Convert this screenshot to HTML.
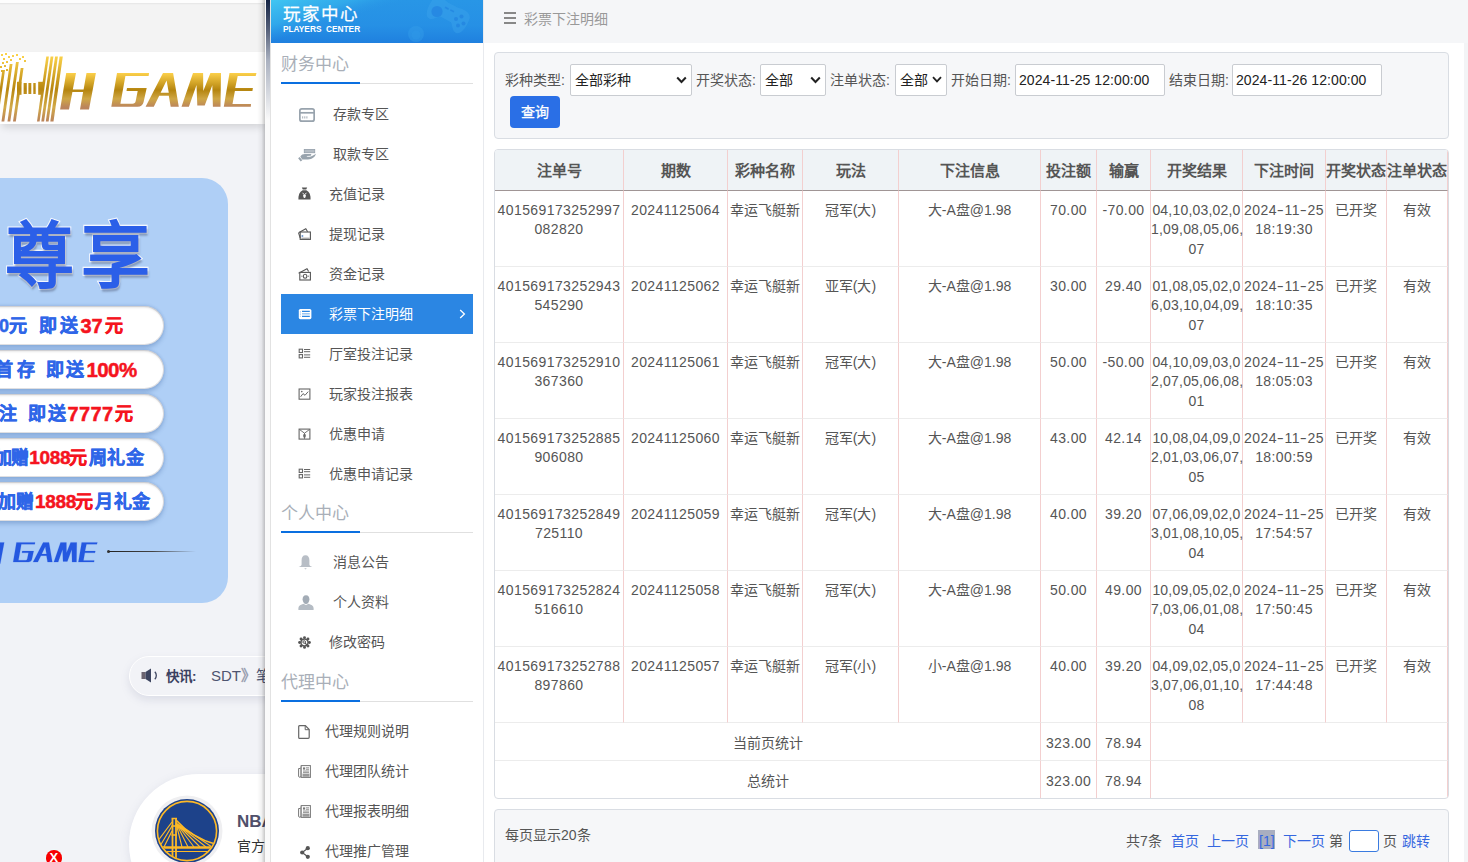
<!DOCTYPE html>
<html lang="zh-CN"><head><meta charset="utf-8">
<style>
*{box-sizing:border-box;margin:0;padding:0}
html,body{width:1468px;height:862px;overflow:hidden}
body{position:relative;background:#f2f3f7;font-family:"Liberation Sans",sans-serif;font-size:14px;color:#555}
.abs{position:absolute}
/* left site */
#topstrip{left:0;top:0;width:265px;height:52px;background:linear-gradient(#e3e3e3 0,#ededed 1px,#f3f3f3 2px);border-top:3px solid #fdfdfd}
#banner{left:0;top:52px;width:265px;height:72px;background:#fff;box-shadow:0 5px 8px -2px rgba(0,0,0,.14)}
#card{left:-40px;top:178px;width:268px;height:425px;background:#afcff6;border-radius:26px}
.pill{position:absolute;left:-40px;width:204px;height:39px;background:#fff;border-radius:20px;box-shadow:inset 0 0 0 1px rgba(140,140,150,.28), inset 0 2px 2px rgba(0,0,0,.09), 0 3px 4px rgba(60,100,160,.32), 0 -1px 3px rgba(60,100,160,.18);font-weight:bold;font-size:20px;color:#2f66e8;-webkit-text-stroke:.6px #2f66e8;line-height:39px;white-space:nowrap;overflow:hidden;text-align:right;padding-right:40px}
.pt{position:absolute;height:22px;line-height:22px;font-size:18px;font-weight:bold;white-space:nowrap;color:#2f66e8;-webkit-text-stroke:.5px #2f66e8}
.pt.r,.pt.rc{color:#f5141e;-webkit-text-stroke:.5px #f5141e}
.pt.r{font-size:19px;letter-spacing:-.3px}


.zx{font-size:69px;line-height:88px;transform:scaleY(1.04);transform-origin:0 0;font-weight:900;color:#2b5fe8;-webkit-text-stroke:2px #f4f8ff;paint-order:stroke fill;letter-spacing:7px;white-space:nowrap;text-shadow:1px 3px 2px rgba(80,90,120,.45)}
#news{left:129px;top:656px;width:200px;height:40px;border-radius:20px;background:#f2f3f7;border:1px solid #fff;box-shadow:0 4px 8px rgba(120,130,160,.18)}
#nba{left:129px;top:774px;width:240px;height:140px;border-radius:70px;background:#fff;box-shadow:0 2px 10px rgba(120,130,160,.15)}
/* sidebar */
#sbshadow{left:257px;top:0;width:8px;height:862px;background:linear-gradient(to right,rgba(0,0,0,0),rgba(0,0,0,.05) 55%,rgba(0,0,0,.22))}
#sidebar{left:265px;top:0;width:218px;height:862px;background:#fafafa}
#sbpanel{left:271px;top:0;width:212px;height:862px;background:#fff}
#sbstrip{left:266px;top:0;width:4px;height:120px;background:linear-gradient(#152444,#56617a 25%,#a9b0bf 50%,rgba(250,250,250,0))}
#sbline{left:270px;top:0;width:1px;height:862px;background:#e2e2e2}
#sbrline{left:483px;top:0;width:1px;height:862px;background:#e8eaee}
#sbhead{left:271px;top:0;width:212px;height:43px;background:#2690e5;color:#fff;overflow:hidden}
.sec{position:absolute;left:281px;width:192px;height:31px;line-height:20px;padding-top:2px;color:#a9afb8;font-size:17px;border-bottom:1px solid #e0e0e0}
.sec:after{content:"";position:absolute;left:0;bottom:-1px;width:79px;height:2px;background:#0a6fe0}
.mi{position:absolute;left:281px;width:192px;height:40px;line-height:40px;color:#555;font-size:14px}
.mi .t{position:absolute;left:48px;top:0}
.mi .ic{position:absolute;left:17px;top:13px;width:14px;height:14px}
.mi.act{background:#2b86e3;color:#fff}
/* content */
#crumb{left:484px;top:0;width:984px;height:43px;background:#f5f6f8}
#content{left:484px;top:43px;width:980px;height:819px;background:#fff}
#rgutter{left:1464px;top:43px;width:4px;height:819px;background:#f3f4f6}
#filter{left:494px;top:52px;width:955px;height:87px;background:#f6f7f9;border:1px solid #d9dde3;border-radius:4px}
.lbl{position:absolute;top:71px;line-height:18px;font-size:14px;color:#555;white-space:nowrap}
.sel{position:absolute;top:64px;height:32px;background:#fff;border:1px solid #c9ccd1;border-radius:2px;color:#222;font-size:14px;line-height:30px;padding-left:4px;white-space:nowrap}
.sel svg{position:absolute;right:4px;top:11px}
.sel.d{color:#222;padding-left:3px;letter-spacing:.08px}
#btn{left:510px;top:96px;width:50px;height:32px;background:#2a6fe6;border-radius:4px;color:#fff;font-size:14px;line-height:32px;text-align:center;-webkit-text-stroke:.3px #fff}
/* table */
#tbl{left:494px;top:149px;width:955px;height:650px;border:1px solid #d9dde3;border-radius:4px;overflow:hidden;background:#fff}
table{border-collapse:separate;border-spacing:0;table-layout:fixed;width:953px}
td,th{text-align:center;vertical-align:top;border-right:1px solid #f3cfcf;color:#555;font-weight:normal}
th{background:#eff3f6;height:41px;padding-bottom:2px;vertical-align:middle;font-weight:bold;font-size:15px;color:#555;border-bottom:1px solid #a09595}
td{height:76px;border-bottom:1px solid #ececec;padding-top:10px;line-height:19.3px;font-size:14px;white-space:nowrap}
.n{letter-spacing:.4px}
.h{font-style:normal;display:inline-block;transform:scaleX(1.5);margin:0 1.3px 0 1.3px}
tr.sum td{height:38px;padding-top:4px;line-height:33px;vertical-align:top}
tr.sum:last-child td{border-bottom:none;height:37px}
#pager{left:494px;top:809px;width:955px;height:80px;background:#f6f7f9;border:1px solid #d9dde3;border-radius:4px}
.pg{position:absolute;top:832px;line-height:18px;font-size:14px;color:#555;white-space:nowrap}
.lnk{color:#3567e0}
</style></head><body>

<!-- left site -->
<div id="topstrip" class="abs"></div>
<div id="banner" class="abs"></div>
<svg class="abs" style="left:0;top:52px" width="265" height="72" viewBox="0 0 265 72">
<defs><linearGradient id="gold3" gradientUnits="userSpaceOnUse" x1="0" y1="4" x2="0" y2="70"><stop offset="0" stop-color="#fbd24a"/><stop offset="0.5" stop-color="#b8860f"/><stop offset="0.78" stop-color="#d2aa48"/><stop offset="1" stop-color="#b9815a"/></linearGradient>
<linearGradient id="gold2" gradientUnits="userSpaceOnUse" x1="0" y1="21" x2="0" y2="55"><stop offset="0" stop-color="#fcd04a"/><stop offset="0.5" stop-color="#b5850f"/><stop offset="0.76" stop-color="#cfa745"/><stop offset="1" stop-color="#bb845c"/></linearGradient></defs>
<g fill="url(#gold3)"><polygon points="46.3,4.6 48.9,4.6 39.6,69.6 37.0,69.6"/><polygon points="50.6,4.6 53.4,4.6 44.1,69.6 41.3,69.6"/><polygon points="55.1,4.6 57.9,4.6 48.6,69.6 45.8,69.6"/><polygon points="59.6,4.6 62.8,4.6 53.5,69.6 50.3,69.6"/><polygon points="2.4,18.0 5.0,18.0 -2.4,69.6 -5.0,69.6"/><polygon points="9.7,12.0 12.5,12.0 4.3,69.6 1.5,69.6"/><polygon points="16.0,10.0 18.8,10.0 10.3,69.6 7.5,69.6"/><polygon points="20.7,16.0 23.5,16.0 15.8,69.6 13.0,69.6"/><rect x="17" y="29.8" width="4.5" height="13"/><rect x="23.6" y="31" width="3.2" height="11"/><rect x="28.4" y="31" width="2.9" height="11"/><rect x="33.3" y="31" width="2.4" height="11"/><rect x="38.2" y="29.8" width="4.8" height="13"/><rect x="1" y="2" width="2" height="2"/><rect x="5" y="1" width="2" height="2"/><rect x="3" y="6" width="2" height="2"/><rect x="8" y="4" width="2" height="2"/><rect x="12" y="3" width="2" height="2"/><rect x="2" y="10" width="2" height="2"/><rect x="6" y="9" width="2" height="2"/><rect x="16" y="2" width="2" height="2"/><rect x="22" y="4" width="2" height="2"/><rect x="24" y="8" width="2" height="2"/><rect x="0" y="14" width="2" height="2"/><rect x="4" y="13" width="2" height="2"/><rect x="1" y="18" width="2" height="2"/><rect x="6" y="17" width="2" height="2"/><rect x="10" y="7" width="2" height="2"/><rect x="19" y="6" width="2" height="2"/></g>
<g fill="url(#gold2)"><polygon points="66.2,21.0 76.0,21.0 72.8,37.5 83.6,37.5 86.5,21.0 95.9,21.0 89.0,57.6 80.0,57.6 83.1,40.0 72.4,40.0 69.0,57.6 60.1,57.6"/><path d="M117 20.9 L149.1 20.9 L148.6 23.9 L125.4 23.9 L120.4 51.7 L132.5 51.7 Q135.2 51.7 135.7 49.0 L137.7 38.9 L126.5 38.9 L127 35.9 L146.7 35.9 L143.6 50.0 Q142.5 54.8 137.5 54.8 L111.3 54.8 Z"/><path fill-rule="evenodd" d="M163.0,20.9 L173.1,20.9 L178.8,54.8 L170.7,54.8 L168.8,43.8 L159.2,43.8 L153.8,54.8 L145.6,54.8 Z M166.6,28.5 L168.8,40.8 L160.6,40.8 Z"/><polygon points="193.0,20.9 203.1,20.9 203.3,38.9 210.4,20.9 221.0,20.9 220.5,54.8 212.9,54.8 212.3,33.2 204.7,53.6 197.3,53.6 196.5,32.9 188.9,54.8 181.5,54.8"/><polygon points="229.5,20.9 256.5,20.9 255.7,23.9 237.7,23.9 235.2,35.9 252.9,35.9 252.4,38.9 234.9,38.9 232.5,52.0 251.0,52.0 250.8,54.8 223.8,54.8"/></g>
</svg>
<div id="card" class="abs"></div>
<div class="abs zx" style="left:5px;top:211px">尊享</div>
<div class="pill" style="top:306px"></div>
<div class="pill" style="top:350px"></div>
<div class="pill" style="top:394px"></div>
<div class="pill" style="top:438px"></div>
<div class="pill" style="top:482px"></div>
<div class="pt c" style="left:-1px;top:315px">0元</div>
<div class="pt c" style="left:39.4px;top:315px">即</div>
<div class="pt c" style="left:60.0px;top:315px">送</div>
<div class="pt r" style="left:80.6px;top:315px;font-size:20px">37</div><div class="pt rc" style="left:104.5px;top:315px">元</div>
<div class="pt c" style="left:-5.0px;top:359px">首</div>
<div class="pt c" style="left:17.4px;top:359px">存</div>
<div class="pt c" style="left:45.8px;top:359px">即</div>
<div class="pt c" style="left:66.0px;top:359px">送</div>
<div class="pt r" style="left:86.5px;top:359px;font-size:20.5px;letter-spacing:-.6px">100%</div>
<div class="pt c" style="left:-1.0px;top:403px">注</div>
<div class="pt c" style="left:27.6px;top:403px">即</div>
<div class="pt c" style="left:47.9px;top:403px">送</div>
<div class="pt r" style="left:67.5px;top:403px;font-size:20px;letter-spacing:.4px">7777</div>
<div class="pt rc" style="left:114.5px;top:403px">元</div>
<div class="pt c" style="left:-6.0px;top:447px">加</div>
<div class="pt c" style="left:10.5px;top:447px">赠</div>
<div class="pt r" style="left:29.2px;top:447px">1088</div>
<div class="pt rc" style="left:69.0px;top:447px">元</div>
<div class="pt c" style="left:88.5px;top:447px">周</div>
<div class="pt c" style="left:107.0px;top:447px">礼</div>
<div class="pt c" style="left:125.8px;top:447px">金</div>
<div class="pt c" style="left:-2.5px;top:491px">加</div>
<div class="pt c" style="left:16.2px;top:491px">赠</div>
<div class="pt r" style="left:34.9px;top:491px">1888</div>
<div class="pt rc" style="left:75.0px;top:491px">元</div>
<div class="pt c" style="left:95.0px;top:491px">月</div>
<div class="pt c" style="left:113.7px;top:491px">礼</div>
<div class="pt c" style="left:132.3px;top:491px">金</div>
<svg class="abs" style="left:0;top:530px" width="110" height="40" viewBox="0 0 110 40"><g transform="translate(-51.4 0.3) scale(0.58)" fill="#2458e0" stroke="#2458e0" stroke-width="0.3"><polygon points="66.2,21.0 76.0,21.0 72.8,37.5 83.6,37.5 86.5,21.0 95.9,21.0 89.0,57.6 80.0,57.6 83.1,40.0 72.4,40.0 69.0,57.6 60.1,57.6"/><path d="M117 20.9 L149.1 20.9 L148.6 23.9 L125.4 23.9 L120.4 51.7 L132.5 51.7 Q135.2 51.7 135.7 49.0 L137.7 38.9 L126.5 38.9 L127 35.9 L146.7 35.9 L143.6 50.0 Q142.5 54.8 137.5 54.8 L111.3 54.8 Z"/><path fill-rule="evenodd" d="M163.0,20.9 L173.1,20.9 L178.8,54.8 L170.7,54.8 L168.8,43.8 L159.2,43.8 L153.8,54.8 L145.6,54.8 Z M166.6,28.5 L168.8,40.8 L160.6,40.8 Z"/><polygon points="193.0,20.9 203.1,20.9 203.3,38.9 210.4,20.9 221.0,20.9 220.5,54.8 212.9,54.8 212.3,33.2 204.7,53.6 197.3,53.6 196.5,32.9 188.9,54.8 181.5,54.8"/><polygon points="229.5,20.9 256.5,20.9 255.7,23.9 237.7,23.9 235.2,35.9 252.9,35.9 252.4,38.9 234.9,38.9 232.5,52.0 251.0,52.0 250.8,54.8 223.8,54.8"/></g></svg>
<div class="abs" style="left:107px;top:550px;width:3px;height:3px;border-radius:2px;background:#333"></div>
<div class="abs" style="left:109px;top:550.5px;width:87px;height:1.5px;background:linear-gradient(to right,#222,#444 50%,rgba(60,60,60,0))"></div>
<div id="news" class="abs"></div>
<svg class="abs" style="left:141px;top:668px" width="17" height="15" viewBox="0 0 17 15"><rect x="0.5" y="4" width="4" height="7" fill="#6b6470"/><path d="M4.5 4 L10 0.5 V14.5 L4.5 11 Z" fill="#3d4560"/><path d="M13.8 3.8 C15.8 5.6 15.8 9.4 13.8 11.2" fill="none" stroke="#3d4560" stroke-width="1.3"/></svg>
<div class="abs" style="left:166px;top:668px;font-weight:bold;font-size:13.5px;line-height:18px;color:#3a4060;white-space:nowrap">快讯:</div>
<div class="abs" style="left:211px;top:666px;font-size:15px;line-height:20px;color:#4e5570;white-space:nowrap">SDT<span style="color:#9aa0b0;font-weight:bold">》</span>笔</div>
<div id="nba" class="abs"></div>
<svg class="abs" style="left:151px;top:795px" width="72" height="72" viewBox="0 0 72 72"><defs><clipPath id="cc"><circle cx="36" cy="36" r="29"/></clipPath></defs><circle cx="36" cy="36" r="35.5" fill="#efeff1"/><circle cx="36" cy="36" r="32" fill="#1d428a"/><circle cx="36" cy="36" r="29.6" fill="none" stroke="#fdb927" stroke-width="1.6"/>
<g clip-path="url(#cc)" stroke="#fdb927" fill="none"><path d="M21.5 24 V72 M25 24 V72" stroke-width="1.8"/><path d="M20.5 23.5 H26 M20.5 31 H26 M20.5 40 H26" stroke-width="1.6"/><path d="M21 27 L6 47 M21 31 L9 51 M21 36 L13 52" stroke-width="1.2"/><path d="M25 25 Q 42 44 68 50" stroke-width="1.5"/><path d="M25 28 L31 52 M25 28 L37 52 M25 28 L43 52 M25 28 L49 52 M25 28 L55 52 M25 28 L61 52" stroke-width="1.1"/><path d="M4 52.5 H68" stroke-width="2.4"/><path d="M4 56.5 H68" stroke-width="1"/></g></svg>
<div class="abs" style="left:237px;top:812px;font-weight:bold;font-size:17px;line-height:20px;color:#50506a;white-space:nowrap">NBA</div>
<div class="abs" style="left:237px;top:837px;font-size:14px;line-height:18px;color:#333;white-space:nowrap">官方</div>
<div class="abs" style="left:46px;top:850px;width:15.5px;height:15.5px;border-radius:50%;background:#f70000;color:#fff;font-size:13px;line-height:15px;text-align:center;font-weight:bold;box-shadow:0 0 0 1px #eefafa">X</div>

<!-- sidebar -->
<div id="sbshadow" class="abs"></div>
<div id="sidebar" class="abs"></div><div id="sbpanel" class="abs"></div>
<div id="sbstrip" class="abs"></div>
<div id="sbline" class="abs"></div>
<div id="sbrline" class="abs"></div>
<div id="sbhead" class="abs">
  <svg class="abs" style="left:0;top:0" width="212" height="43" viewBox="0 0 212 43"><defs><linearGradient id="hb" x1="0" y1="0" x2="0" y2="1"><stop offset="0" stop-color="#2896e6"/><stop offset="0.6" stop-color="#2690e5"/><stop offset="1" stop-color="#1f80df"/></linearGradient><linearGradient id="hc" x1="0" y1="0" x2="1" y2="1"><stop offset="0" stop-color="#40c6f2"/><stop offset="0.3" stop-color="#33aeec" stop-opacity="0.8"/><stop offset="0.5" stop-color="#2a98e7" stop-opacity="0"/></linearGradient></defs>
<rect width="212" height="43" fill="url(#hb)"/><path d="M0 0 H135 L0 42 Z" fill="url(#hc)"/>
<g transform="translate(177 15) rotate(28)"><path d="M-21 -5 C-21 -12 -13 -13 -6 -11 L6 -11 C13 -13 21 -12 21 -5 C22 4 20 12 15 12 C11 12 9 7 6 5 L-6 5 C-9 7 -11 12 -15 12 C-20 12 -22 4 -21 -5 Z" fill="#3ea5ec" opacity="0.38"/></g>
<circle cx="166" cy="11.5" r="5.6" fill="#1f7fdf" opacity="0.6"/><g fill="#1f7fdf" opacity="0.6"><circle cx="185" cy="19" r="2"/><circle cx="190.5" cy="16.5" r="2"/><circle cx="187" cy="25.5" r="2"/><circle cx="192.5" cy="23.5" r="2"/><rect x="174" y="7.5" width="4" height="1.6" transform="rotate(28 176 8)"/><rect x="179" y="10" width="4" height="1.6" transform="rotate(28 181 11)"/></g>
<circle cx="145" cy="34" r="8" fill="#3aa2ea" opacity="0.35"/><circle cx="145" cy="35" r="4.5" fill="#2d98e8" opacity="0.5"/>
</svg>
<div class="abs" style="left:11.5px;top:3px;font-size:17.5px;line-height:22px;letter-spacing:2.2px;white-space:nowrap;-webkit-text-stroke:.25px #fff">玩家中心</div>
  <div class="abs" style="left:12px;top:24px;font-size:8.3px;line-height:10px;white-space:nowrap;font-weight:bold">PLAYERS&nbsp; CENTER</div>
</div>

<div class="sec" style="top:53px">财务中心</div>
<div class="mi" style="top:94px"><span class="t" style="left:52px">存款专区</span></div>
<div class="mi" style="top:134px"><span class="t" style="left:52px">取款专区</span></div>
<div class="mi" style="top:174px"><span class="t">充值记录</span></div>
<div class="mi" style="top:214px"><span class="t">提现记录</span></div>
<div class="mi" style="top:254px"><span class="t">资金记录</span></div>
<div class="mi act" style="top:294px"><span class="t">彩票下注明细</span><svg class="abs" style="left:178px;top:15px" width="7" height="10" viewBox="0 0 7 10"><path d="M1.2 1 L5.4 5 L1.2 9" fill="none" stroke="#fff" stroke-width="1.3"/></svg></div>
<div class="mi" style="top:334px"><span class="t">厅室投注记录</span></div>
<div class="mi" style="top:374px"><span class="t">玩家投注报表</span></div>
<div class="mi" style="top:414px"><span class="t">优惠申请</span></div>
<div class="mi" style="top:454px"><span class="t">优惠申请记录</span></div>
<div class="sec" style="top:502px">个人中心</div>
<div class="mi" style="top:542px"><span class="t" style="left:52px">消息公告</span></div>
<div class="mi" style="top:582px"><span class="t" style="left:52px">个人资料</span></div>
<div class="mi" style="top:622px"><span class="t">修改密码</span></div>
<div class="sec" style="top:671px">代理中心</div>
<div class="mi" style="top:711px"><span class="t" style="left:44px">代理规则说明</span></div>
<div class="mi" style="top:751px"><span class="t" style="left:44px">代理团队统计</span></div>
<div class="mi" style="top:791px"><span class="t" style="left:44px">代理报表明细</span></div>
<div class="mi" style="top:831px"><span class="t" style="left:44px">代理推广管理</span></div>
<svg class="abs" style="left:299px;top:108px" width="16" height="14" viewBox="0 0 16 14"><rect x="0.85" y="0.85" width="14.3" height="12.3" rx="2" fill="none" stroke="#98a3ad" stroke-width="1.7"/><line x1="1" y1="4.8" x2="15" y2="4.8" stroke="#98a3ad" stroke-width="1.7"/><path d="M3.7 8.3v2.2M5.8 8.3v2.2M7.9 8.3v2.2" stroke="#98a3ad" stroke-width="0.9"/></svg>
<svg class="abs" style="left:298px;top:149px" width="19" height="13" viewBox="0 0 19 13"><rect x="6.3" y="0.4" width="10.4" height="3.3" fill="#b4bcc4" stroke="#98a3ad" stroke-width="0.9"/><path d="M2.3 7.6 C3.3 5.8 5 5 7 5 L12.6 5 C13.6 5 13.7 6.5 12.6 6.7 L8.6 6.9 C9.1 7.7 10.6 8 12 7.7 C14 7.3 16 5.8 17.9 4.7 C17.7 6.5 16.1 8.4 14 9.4 C12.5 10.1 10.5 10.5 8.5 10.5 L4.2 10.5 Z" fill="#98a3ad"/><path d="M0.9 8.7 L3.5 11.8" stroke="#98a3ad" stroke-width="2"/></svg>
<svg class="abs" style="left:298px;top:187px" width="13" height="13" viewBox="0 0 13 13"><path d="M3.8 0.5 L9.2 0.5 L8.2 2.6 L4.8 2.6 Z" fill="#555"/><path d="M4.6 3.2 L8.4 3.2 C11.5 4.8 12.8 8 12.6 12.6 L0.4 12.6 C0.2 8 1.5 4.8 4.6 3.2 Z" fill="#555"/><path d="M4.6 5.8 L6.5 8 L8.4 5.8 M6.5 8 V11 M5 8.6 H8 M5 9.8 H8" stroke="#fff" stroke-width="0.9" fill="none"/></svg>
<svg class="abs" style="left:298px;top:228px" width="13" height="12" viewBox="0 0 13 12"><path d="M0.6 4.8 L7.8 0.8 L9.6 3.8" fill="none" stroke="#555" stroke-width="1.1"/><rect x="2.2" y="4" width="10.2" height="7.4" fill="#fff" stroke="#555" stroke-width="1.1"/><path d="M0.6 4.8 L2.2 10" stroke="#555" stroke-width="1.1"/><rect x="3.6" y="7" width="1.6" height="2" fill="#7a9fd0"/><line x1="3.4" y1="10.2" x2="11.6" y2="10.2" stroke="#777" stroke-width="0.8"/></svg>
<svg class="abs" style="left:298px;top:268px" width="13" height="13" viewBox="0 0 13 13"><path d="M0.6 5.2 L9 0.8 L10.6 3.6" fill="none" stroke="#555" stroke-width="1.1"/><rect x="1.8" y="4.4" width="10.6" height="7.6" fill="#fff" stroke="#555" stroke-width="1.1"/><ellipse cx="7.1" cy="8.2" rx="1.8" ry="2" fill="none" stroke="#555" stroke-width="1.1"/><path d="M3.4 8.2h1M9.8 8.2h1" stroke="#555" stroke-width="1"/></svg>
<svg class="abs" style="left:298px;top:308px" width="14" height="12" viewBox="0 0 14 12"><rect x="0.8" y="1" width="12.6" height="10.2" rx="1.6" fill="#fff"/><path d="M4 3.4H11.8M4 8.3H11.8" stroke="#2b86e3" stroke-width="1.3"/><path d="M4 5.85H11.8" stroke="#2b86e3" stroke-width="0.7"/><path d="M2.4 3.4V8.6" stroke="#2b86e3" stroke-width="0.6" stroke-dasharray="1 1.2"/></svg>
<svg class="abs" style="left:298px;top:348px" width="13" height="12" viewBox="0 0 13 12"><rect x="1.2" y="1.2" width="3.3" height="3.3" fill="none" stroke="#666" stroke-width="1.1"/><rect x="1.2" y="6.6" width="3.3" height="3.3" fill="none" stroke="#666" stroke-width="1.1"/><path d="M6 1.5H12.2M6 3.7H12.2M6 6.9H12.2M6 9.3H12.2" stroke="#666" stroke-width="1"/></svg>
<svg class="abs" style="left:298px;top:388px" width="13" height="12" viewBox="0 0 13 12"><rect x="1.1" y="1" width="10.8" height="10.2" fill="none" stroke="#666" stroke-width="1.1"/><path d="M2.6 8.8 L5 5.6 L7 7.3 L10.2 3.6" fill="none" stroke="#666" stroke-width="1"/><circle cx="3.8" cy="3.6" r="0.8" fill="#666"/></svg>
<svg class="abs" style="left:298px;top:428px" width="13" height="12" viewBox="0 0 13 12"><rect x="1.1" y="1.1" width="10.8" height="10" fill="none" stroke="#666" stroke-width="1.1"/><path d="M1.5 1.5 L6.5 5.2 L11.5 1.5" fill="none" stroke="#666" stroke-width="0.9"/><ellipse cx="6.5" cy="7.8" rx="1.4" ry="2.1" fill="#777"/><path d="M6.5 5 V11" stroke="#666" stroke-width="0.8"/></svg>
<svg class="abs" style="left:298px;top:555px" width="15" height="15" viewBox="0 0 15 15"><path d="M7.5 0.3 C4.8 0.3 3.6 2.4 3.6 5.2 L3.6 9.5 C3.6 10.8 2.4 11.5 0.6 12 L14.4 12 C12.6 11.5 11.4 10.8 11.4 9.5 L11.4 5.2 C11.4 2.4 10.2 0.3 7.5 0.3 Z" fill="#b8bec6"/><path d="M6.2 13.3 H8.8 L7.5 14.6 Z" fill="#b8bec6"/></svg>
<svg class="abs" style="left:298px;top:595px" width="16" height="15" viewBox="0 0 16 15"><path d="M8 0.2 C10.5 0.2 11.4 2.2 11.4 4.2 C11.4 6.8 10 9 8 9 C6 9 4.6 6.8 4.6 4.2 C4.6 2.2 5.5 0.2 8 0.2 Z" fill="#a3acb6"/><path d="M5.6 8.8 C3 9.6 0.4 10.8 0.4 13 L0.4 15 L15.6 15 L15.6 13 C15.6 10.8 13 9.6 10.4 8.8 C9.6 9.6 8.8 9.9 8 9.9 C7.2 9.9 6.4 9.6 5.6 8.8 Z" fill="#b5bcc4"/></svg>
<svg class="abs" style="left:298px;top:636px" width="13" height="13" viewBox="0 0 13 13"><g fill="#555"><circle cx="11.40" cy="6.50" r="1.45"/><circle cx="9.96" cy="9.96" r="1.45"/><circle cx="6.50" cy="11.40" r="1.45"/><circle cx="3.04" cy="9.96" r="1.45"/><circle cx="1.60" cy="6.50" r="1.45"/><circle cx="3.04" cy="3.04" r="1.45"/><circle cx="6.50" cy="1.60" r="1.45"/><circle cx="9.96" cy="3.04" r="1.45"/></g><circle cx="6.5" cy="6.5" r="3.5" fill="#fff" stroke="#555" stroke-width="1.4"/><circle cx="6.2" cy="6" r="1.3" fill="none" stroke="#555" stroke-width="1"/><path d="M7 7 L8.8 8.8" stroke="#555" stroke-width="1.1"/></svg>
<svg class="abs" style="left:298px;top:725px" width="12" height="14" viewBox="0 0 12 14"><path d="M1.5 0.7 H7.4 L11.2 4.5 V12.3 C11.2 12.9 10.8 13.3 10.2 13.3 H1.5 C1 13.3 0.7 12.9 0.7 12.3 V1.7 C0.7 1.1 1 0.7 1.5 0.7 Z" fill="none" stroke="#666" stroke-width="1.2"/><path d="M7.2 0.8 V4.7 H11" fill="none" stroke="#666" stroke-width="1"/></svg>
<svg class="abs" style="left:298px;top:765px" width="13" height="13" viewBox="0 0 13 13"><path d="M3 1.5 V11 C3 11.8 2.5 12.3 1.8 12.3 C1.1 12.3 0.6 11.8 0.6 11 V3.5 H2.5" fill="none" stroke="#777" stroke-width="1"/><rect x="3.2" y="0.6" width="9.2" height="11.8" fill="#fff" stroke="#777" stroke-width="1"/><rect x="5" y="2.4" width="2.2" height="2.2" fill="#777"/><path d="M8 2.8H11M8 4.3H11M5 6H11M5 7.4H11" stroke="#777" stroke-width="0.8"/><rect x="4.5" y="8.6" width="7" height="3.2" fill="#999"/></svg>
<svg class="abs" style="left:300px;top:846px" width="10" height="13" viewBox="0 0 10 13"><g fill="#555"><circle cx="7.8" cy="2.2" r="2.1"/><circle cx="2.2" cy="6.5" r="2.1"/><circle cx="7.8" cy="10.8" r="2.1"/></g><path d="M7.8 2.2 L2.2 6.5 L7.8 10.8" fill="none" stroke="#555" stroke-width="1.2"/></svg>
<svg class="abs" style="left:298px;top:468px" width="13" height="12" viewBox="0 0 13 12"><rect x="1.2" y="1.2" width="3.3" height="3.3" fill="none" stroke="#666" stroke-width="1.1"/><rect x="1.2" y="6.6" width="3.3" height="3.3" fill="none" stroke="#666" stroke-width="1.1"/><path d="M6 1.5H12.2M6 3.7H12.2M6 6.9H12.2M6 9.3H12.2" stroke="#666" stroke-width="1"/></svg>
<svg class="abs" style="left:298px;top:805px" width="13" height="13" viewBox="0 0 13 13"><path d="M3 1.5 V11 C3 11.8 2.5 12.3 1.8 12.3 C1.1 12.3 0.6 11.8 0.6 11 V3.5 H2.5" fill="none" stroke="#777" stroke-width="1"/><rect x="3.2" y="0.6" width="9.2" height="11.8" fill="#fff" stroke="#777" stroke-width="1"/><rect x="5" y="2.4" width="2.2" height="2.2" fill="#777"/><path d="M8 2.8H11M8 4.3H11M5 6H11M5 7.4H11" stroke="#777" stroke-width="0.8"/><rect x="4.5" y="8.6" width="7" height="3.2" fill="#999"/></svg>

<!-- content -->
<div id="crumb" class="abs"></div>
<div id="content" class="abs"></div>
<div id="rgutter" class="abs"></div>
<div class="abs" style="left:524px;top:10px;color:#999;font-size:14px;line-height:18px">彩票下注明细</div>
<div class="abs" style="left:504px;top:12px;width:12px;height:2px;background:#888"></div><div class="abs" style="left:504px;top:17px;width:12px;height:2px;background:#888"></div><div class="abs" style="left:504px;top:22px;width:12px;height:2px;background:#888"></div>

<div id="filter" class="abs"></div>
<div class="lbl" style="left:505px">彩种类型:</div>
<div class="sel" style="left:570px;width:122px">全部彩种<svg width="11" height="8" viewBox="0 0 11 8"><path d="M1.2 1.5 L5.5 6 L9.8 1.5" fill="none" stroke="#222" stroke-width="2"/></svg></div>
<div class="lbl" style="left:696px">开奖状态:</div>
<div class="sel" style="left:760px;width:66px">全部<svg width="11" height="8" viewBox="0 0 11 8"><path d="M1.2 1.5 L5.5 6 L9.8 1.5" fill="none" stroke="#222" stroke-width="2"/></svg></div>
<div class="lbl" style="left:830px">注单状态:</div>
<div class="sel" style="left:895px;width:52px">全部<svg style="right:4px" width="10" height="7" viewBox="0 0 10 7"><path d="M1 1.2 L5 5.4 L9 1.2" fill="none" stroke="#222" stroke-width="1.8"/></svg></div>
<div class="lbl" style="left:951px">开始日期:</div>
<div class="sel d" style="left:1015px;width:150px">2024-11-25 12:00:00</div>
<div class="lbl" style="left:1169px">结束日期:</div>
<div class="sel d" style="left:1232px;width:150px">2024-11-26 12:00:00</div>
<div id="btn" class="abs">查询</div>

<div id="tbl" class="abs">
<table>
<colgroup><col style="width:129px"><col style="width:104px"><col style="width:75px"><col style="width:96px"><col style="width:142px"><col style="width:56px"><col style="width:54px"><col style="width:92px"><col style="width:83px"><col style="width:61px"><col style="width:61px"></colgroup>
<tr><th>注单号</th><th>期数</th><th>彩种名称</th><th>玩法</th><th>下注信息</th><th>投注额</th><th>输赢</th><th>开奖结果</th><th>下注时间</th><th>开奖状态</th><th>注单状态</th></tr>
<tr><td class="n">401569173252997<br>082820</td><td class="n">20241125064</td><td>幸运飞艇新</td><td>冠军(大)</td><td>大-A盘@1.98</td><td class="n">70.00</td><td class="n">-70.00</td><td class="n" style="letter-spacing:.2px">04,10,03,02,0<br>1,09,08,05,06,<br>07</td><td class="n">2024<i class="h">-</i>11<i class="h">-</i>25<br>18:19:30</td><td>已开奖</td><td>有效</td></tr>
<tr><td class="n">401569173252943<br>545290</td><td class="n">20241125062</td><td>幸运飞艇新</td><td>亚军(大)</td><td>大-A盘@1.98</td><td class="n">30.00</td><td class="n">29.40</td><td class="n" style="letter-spacing:.2px">01,08,05,02,0<br>6,03,10,04,09,<br>07</td><td class="n">2024<i class="h">-</i>11<i class="h">-</i>25<br>18:10:35</td><td>已开奖</td><td>有效</td></tr>
<tr><td class="n">401569173252910<br>367360</td><td class="n">20241125061</td><td>幸运飞艇新</td><td>冠军(大)</td><td>大-A盘@1.98</td><td class="n">50.00</td><td class="n">-50.00</td><td class="n" style="letter-spacing:.2px">04,10,09,03,0<br>2,07,05,06,08,<br>01</td><td class="n">2024<i class="h">-</i>11<i class="h">-</i>25<br>18:05:03</td><td>已开奖</td><td>有效</td></tr>
<tr><td class="n">401569173252885<br>906080</td><td class="n">20241125060</td><td>幸运飞艇新</td><td>冠军(大)</td><td>大-A盘@1.98</td><td class="n">43.00</td><td class="n">42.14</td><td class="n" style="letter-spacing:.2px">10,08,04,09,0<br>2,01,03,06,07,<br>05</td><td class="n">2024<i class="h">-</i>11<i class="h">-</i>25<br>18:00:59</td><td>已开奖</td><td>有效</td></tr>
<tr><td class="n">401569173252849<br>725110</td><td class="n">20241125059</td><td>幸运飞艇新</td><td>冠军(大)</td><td>大-A盘@1.98</td><td class="n">40.00</td><td class="n">39.20</td><td class="n" style="letter-spacing:.2px">07,06,09,02,0<br>3,01,08,10,05,<br>04</td><td class="n">2024<i class="h">-</i>11<i class="h">-</i>25<br>17:54:57</td><td>已开奖</td><td>有效</td></tr>
<tr><td class="n">401569173252824<br>516610</td><td class="n">20241125058</td><td>幸运飞艇新</td><td>冠军(大)</td><td>大-A盘@1.98</td><td class="n">50.00</td><td class="n">49.00</td><td class="n" style="letter-spacing:.2px">10,09,05,02,0<br>7,03,06,01,08,<br>04</td><td class="n">2024<i class="h">-</i>11<i class="h">-</i>25<br>17:50:45</td><td>已开奖</td><td>有效</td></tr>
<tr><td class="n">401569173252788<br>897860</td><td class="n">20241125057</td><td>幸运飞艇新</td><td>冠军(小)</td><td>小-A盘@1.98</td><td class="n">40.00</td><td class="n">39.20</td><td class="n" style="letter-spacing:.2px">04,09,02,05,0<br>3,07,06,01,10,<br>08</td><td class="n">2024<i class="h">-</i>11<i class="h">-</i>25<br>17:44:48</td><td>已开奖</td><td>有效</td></tr>
<tr class="sum"><td colspan="5">当前页统计</td><td class="n">323.00</td><td class="n">78.94</td><td colspan="4"></td></tr>
<tr class="sum"><td colspan="5">总统计</td><td class="n">323.00</td><td class="n">78.94</td><td colspan="4"></td></tr>
</table>
</div>

<div id="pager" class="abs"></div>
<div class="pg" style="left:505px;top:826px">每页显示20条</div>
<div class="pg" style="left:1126px">共7条</div>
<div class="pg lnk" style="left:1171px">首页</div>
<div class="pg lnk" style="left:1207px">上一页</div>
<div class="abs" style="left:1258px;top:830px;width:17px;height:19px;background:#a9aec0"></div>
<div class="pg lnk" style="left:1259px">[1]</div>
<div class="pg lnk" style="left:1283px">下一页</div>
<div class="pg" style="left:1329px">第</div>
<div class="abs" style="left:1349px;top:830px;width:30px;height:22px;border:1.5px solid #3a7be0;border-radius:3px;background:#fff"></div>
<div class="pg" style="left:1383px">页</div>
<div class="pg lnk" style="left:1402px">跳转</div>

</body></html>
